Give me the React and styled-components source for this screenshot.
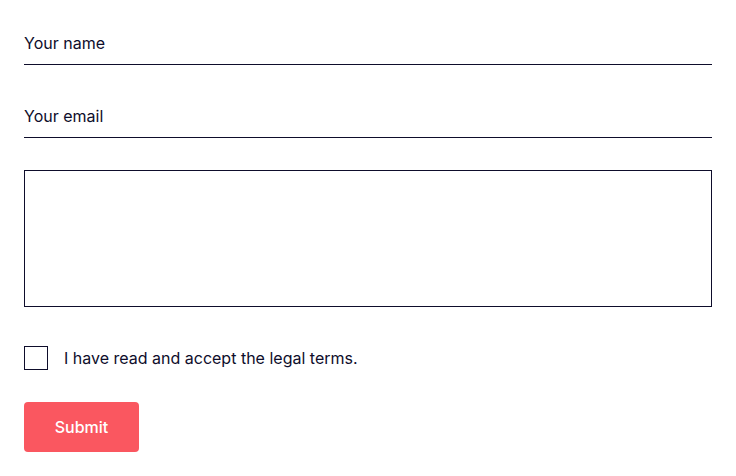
import React from "react";
import styled, { createGlobalStyle } from "styled-components";

const GlobalStyle = createGlobalStyle`
  body {
    margin: 0;
    background: #fff;
    font-family: Inter, "Noto Sans", sans-serif;
    color: #0e0d2b;
  }
`;

const StyledForm = styled.form`
  display: flex;
  flex-direction: column;
  width: 688px;
  padding: 23px 24px 0;
`;

const StyledInput = styled.input`
  box-sizing: border-box;
  height: 42px;
  margin: 0 0 ${(p) => p.$gap || 0}px;
  padding: 0 0 2px;
  border: none;
  border-bottom: 1px solid #0e0d2b;
  font-family: inherit;
  font-size: 16px;
  color: #0e0d2b;
  background: transparent;
  outline: none;

  &::placeholder {
    color: #0e0d2b;
    opacity: 1;
  }
`;

const StyledTextarea = styled.textarea`
  box-sizing: border-box;
  height: 137px;
  margin: 0;
  padding: 10px;
  border: 1px solid #0e0d2b;
  font-family: inherit;
  font-size: 16px;
  resize: none;
  outline: none;
`;

const StyledCheckRow = styled.label`
  display: flex;
  align-items: center;
  gap: 16px;
  margin-top: 39px;
  font-size: 16px;
  cursor: pointer;
`;

const StyledBox = styled.span`
  box-sizing: border-box;
  width: 24px;
  height: 24px;
  border: 1px solid #0e0d2b;
  flex-shrink: 0;
`;

const StyledButton = styled.button`
  align-self: flex-start;
  width: 115px;
  height: 50px;
  margin-top: 32px;
  border: none;
  border-radius: 4px;
  background: #fa5760;
  color: #fff;
  font-family: inherit;
  font-size: 16px;
  font-weight: 500;
  cursor: pointer;
`;

export default function App() {
  return (
    <>
      <GlobalStyle />
      <StyledForm onSubmit={(e) => e.preventDefault()}>
        <StyledInput type="text" placeholder="Your name" $gap={31} />
        <StyledInput type="email" placeholder="Your email" $gap={32} />
        <StyledTextarea />
        <StyledCheckRow>
          <StyledBox />
          I have read and accept the legal terms.
        </StyledCheckRow>
        <StyledButton type="submit">Submit</StyledButton>
      </StyledForm>
    </>
  );
}
